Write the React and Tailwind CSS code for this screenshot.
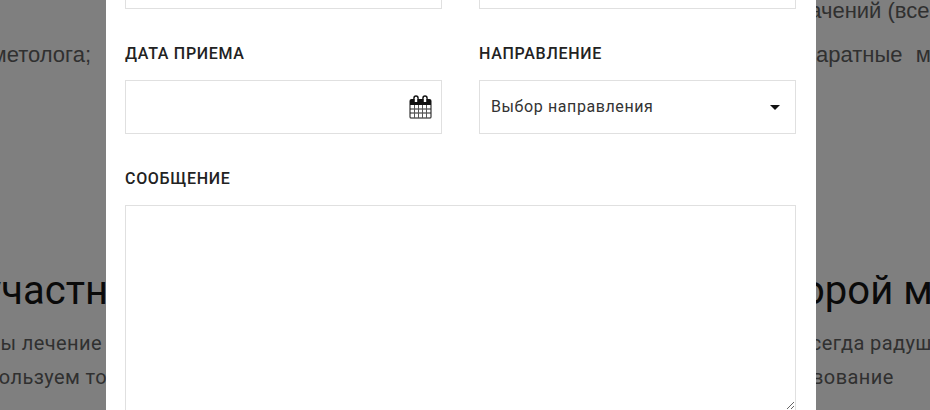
import React from 'react';

const CalendarIcon = () => (
    <svg width="23" height="24" viewBox="0 0 23 24" fill="none">
        <path d="M0.5 6 Q0.5 4 2.5 4 H20.5 Q22.5 4 22.5 6 V22 Q22.5 23.5 21 23.5 H2 Q0.5 23.5 0.5 22 Z" fill="#111" />
        <path d="M5 7.5V3Q5 1 7 1T9 3V7.5M14 7.5V3Q14 1 16 1T18 3V7.5" stroke="#111" strokeWidth="1.5" />
        <path d="M5.8 3h2.4v4H5.8zM14.8 3h2.4v4h-2.4z" fill="#fff" />
        <path d="M1.5 10h20v12.5h-20z" fill="#fff" />
        <path d="M1 14H22M1 18H22" stroke="#222" />
        <path d="M5.5 10V23M9.5 10V23M13.5 10V23M17.5 10V23" stroke="#555" />
    </svg>
);

const labelClass = "block text-[16px] leading-[18px] font-medium uppercase tracking-[0.7px] text-[#222]";
const topLine = "font-['Liberation_Sans',sans-serif] text-[22px] leading-[28px]";
const bodyLine = "text-[20px] leading-[34px] tracking-[0.4px]";

const App = () => {
    return (
        <div className="relative w-[930px] h-[410px] overflow-hidden bg-[#7f7f7f] font-['Roboto',sans-serif]">
            {/* Page behind the overlay */}
            <div className="flex justify-between h-full">
                <div className="w-[300px] -ml-[198px] flex flex-col items-end text-[#303030] whitespace-nowrap">
                    <p className={`mt-[41px] mr-[11px] ${topLine}`}>косметолога;</p>
                    <h2 className="mt-[198px] -mr-[6px] text-[40px] leading-[48px] text-[#0a0a0a]">участн</h2>
                    <p className={`mt-[11px] ${bodyLine}`}>ы лечение</p>
                    <p className={`-mr-[5px] ${bodyLine}`}>пользуем то</p>
                </div>
                <div className="w-[416px] -mr-[186px] flex flex-col text-[#303030] whitespace-nowrap">
                    <p className={`-mt-[3px] ml-[87px] ${topLine}`}>значений (всего</p>
                    <p className={`mt-[16px] ml-[80px] [word-spacing:7px] ${topLine}`}>аппаратные методы</p>
                    <h2 className="mt-[198px] ml-[61px] text-[40px] leading-[48px] text-[#0a0a0a]">второй молодости</h2>
                    <p className={`mt-[11px] ml-[99px] ${bodyLine}`}>всегда радушно</p>
                    <p className={`ml-[112px] ${bodyLine}`}>вование</p>
                </div>
            </div>

            {/* Modal */}
            <div className="absolute top-0 left-[106px] w-[710px] h-full bg-white pl-[19px] pr-[20px] text-[#222]">
                <div className="grid grid-cols-[317px_317px] gap-x-[37px]">
                    <div className="h-[9px] border border-t-0 border-[#e0e0e0]" />
                    <div className="h-[9px] border border-t-0 border-[#e0e0e0]" />
                </div>
                <div className="grid grid-cols-[317px_317px] gap-x-[37px] mt-[36px]">
                    <div>
                        <label className={labelClass}>Дата приема</label>
                        <div className="mt-[17px] h-[54px] border border-[#e0e0e0] flex items-center justify-end pr-[9px]">
                            <CalendarIcon />
                        </div>
                    </div>
                    <div>
                        <label className={labelClass}>Направление</label>
                        <div className="mt-[17px] h-[54px] border border-[#e0e0e0] flex items-center justify-between pl-[11px] pr-[15px]">
                            <span className="text-[16px] tracking-[0.6px] text-[#333]">Выбор направления</span>
                            <span className="w-0 h-0 border-x-[5px] border-x-transparent border-t-[5px] border-t-[#111]" />
                        </div>
                    </div>
                </div>
                <label className={`${labelClass} mt-[36px]`}>Сообщение</label>
                <textarea className="block mt-[17px] w-full h-[206px] border border-[#e0e0e0] outline-none" />
            </div>
        </div>
    );
};

export default App;
